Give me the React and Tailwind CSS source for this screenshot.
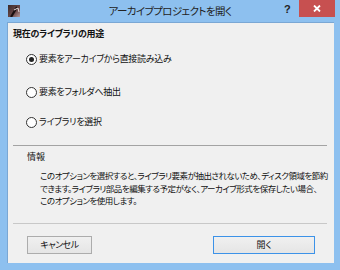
import React from "react";

const jp = "font-['Noto_Sans_CJK_JP','Noto_Sans',sans-serif] [font-feature-settings:'palt']";

function Radio({ checked, label }) {
  return (
    <div className="flex items-center h-[14px]">
      <div className="w-[11px] h-[11px] rounded-full border border-[#333] bg-white flex items-center justify-center">
        {checked && <div className="w-[5px] h-[5px] rounded-full bg-[#222]" />}
      </div>
      <span className="ml-[2px] text-[9px] leading-[14px] text-[#111] tracking-[-0.3px] whitespace-nowrap">{label}</span>
    </div>
  );
}

export default function App() {
  return (
    <div className={`w-[340px] h-[270px] bg-[#8dc0ef] flex flex-col ${jp}`}>
      {/* title bar */}
      <div className="h-[22px] flex items-start relative">
        <svg className="ml-[8px] mt-[5px]" width="12" height="12" viewBox="0 0 12 12">
          <defs>
            <linearGradient id="g" x1="0" y1="0" x2="1" y2="1">
              <stop offset="0" stopColor="#3a2a2a" />
              <stop offset="0.6" stopColor="#6b4a4a" />
              <stop offset="1" stopColor="#b59a9a" />
            </linearGradient>
          </defs>
          <rect width="12" height="12" fill="url(#g)" />
          <path d="M3 12 L9 2" stroke="#1a1010" strokeWidth="2.2" />
          <path d="M6 5 L10 3 L11 7" stroke="#e9e0e0" strokeWidth="1" fill="none" />
        </svg>
        <div className="absolute left-0 right-0 top-[3px] text-center text-[10.5px] leading-[16px] text-[#222] tracking-[-0.6px] whitespace-nowrap">
          アーカイブプロジェクトを開く
        </div>
        <div className="absolute left-[284px] top-[1px] text-[11px] font-bold text-[#222] font-['Liberation_Sans',sans-serif]">?</div>
        <div className="absolute left-[299px] top-0 w-[36px] h-[17px] bg-[#c75050] flex items-center justify-center">
          <svg width="8" height="7" viewBox="0 0 8 7">
            <path d="M1 0.5 L7 6.5 M7 0.5 L1 6.5" stroke="#fff" strokeWidth="1.8" />
          </svg>
        </div>
      </div>
      {/* client */}
      <div className="ml-[7px] w-[327px] h-[241px] bg-[#f0f0f0] border-l border-t border-[#7aa7d4] flex flex-col">
        <div className="ml-[5px] mt-[4px] text-[9px] leading-[14px] font-bold text-[#111] tracking-[-0.3px] whitespace-nowrap">
          現在のライブラリの用途
        </div>
        <div className="ml-[18px] mt-[11px]">
          <Radio checked label="要素をアーカイブから直接読み込み" />
        </div>
        <div className="ml-[18px] mt-[19px]">
          <Radio label="要素をフォルダへ抽出" />
        </div>
        <div className="ml-[18px] mt-[16px]">
          <Radio label="ライブラリを選択" />
        </div>
        <div className="ml-[5px] mr-[7px] mt-[16px] h-px bg-[#a3a3a3]" />
        <div className="ml-[19px] mt-[4px] text-[9px] leading-[14px] text-[#111]">情報</div>
        <div className="ml-[32px] mt-[5px] text-[8.5px] leading-[12.5px] text-[#111] tracking-[-0.5px] whitespace-nowrap">
          <div>このオプションを選択すると、ライブラリ要素が抽出されないため、ディスク領域を節約</div>
          <div>できます。ライブラリ部品を編集する予定がなく、アーカイブ形式を保存したい場合、</div>
          <div>このオプションを使用します。</div>
        </div>
        <div className="ml-[5px] mr-[7px] mt-[16px] h-px bg-[#c8c8c8]" />
        <div className="flex mt-[12px]">
          <button className="ml-[19px] w-[65px] h-[18px] border border-[#acacac] bg-gradient-to-b from-[#f0f0f0] to-[#e5e5e5] text-[9px] leading-[14px] text-[#111] tracking-[-0.5px]">
            キャンセル
          </button>
          <button className="ml-[121px] w-[102px] h-[18px] border border-[#3c92e8] bg-gradient-to-b from-[#f0f0f0] to-[#e5e5e5] text-[9px] leading-[14px] text-[#111]">
            開く
          </button>
        </div>
      </div>
    </div>
  );
}
